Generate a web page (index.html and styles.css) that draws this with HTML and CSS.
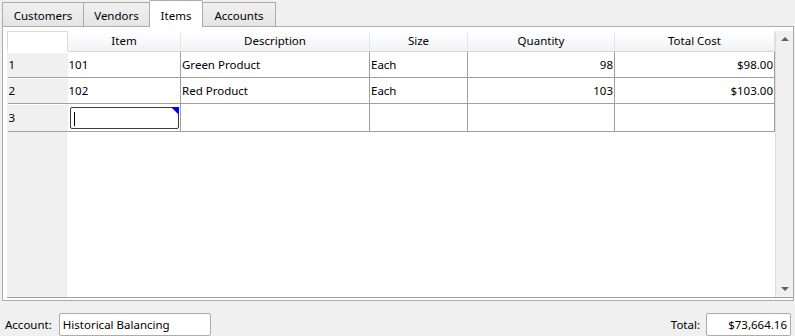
FILE: index.html
```html
<!DOCTYPE html>
<html lang="en">
<head>
  <meta charset="UTF-8" />
  <title>Items</title>
  <link rel="stylesheet" href="styles.css">
</head>
<body>
  <div class="tabs">
    <div class="tab tab-customers">Customers</div>
    <div class="tab tab-vendors">Vendors</div>
    <div class="tab tab-items active">Items</div>
    <div class="tab tab-accounts">Accounts</div>
  </div>

  <div class="panel">
    <div class="grid">
      <div class="grid-body">
        <table class="items">
          <colgroup>
            <col class="c-row" />
            <col class="c-item" />
            <col class="c-desc" />
            <col class="c-size" />
            <col class="c-qty" />
            <col class="c-total" />
          </colgroup>
          <thead>
            <tr>
              <th class="corner"></th>
              <th>Item</th>
              <th>Description</th>
              <th>Size</th>
              <th>Quantity</th>
              <th>Total Cost</th>
            </tr>
          </thead>
          <tbody>
            <tr>
              <td class="rowhead">1</td>
              <td>101</td>
              <td>Green Product</td>
              <td>Each</td>
              <td class="num">98</td>
              <td class="num">$98.00</td>
            </tr>
            <tr>
              <td class="rowhead">2</td>
              <td>102</td>
              <td>Red Product</td>
              <td>Each</td>
              <td class="num">103</td>
              <td class="num">$103.00</td>
            </tr>
            <tr>
              <td class="rowhead">3</td>
              <td class="editing"><div class="editor"><span class="caret"></span><span class="flag"></span></div></td>
              <td></td>
              <td></td>
              <td></td>
              <td></td>
            </tr>
          </tbody>
        </table>
      </div>
      <div class="scrollbar">
        <div class="arrow up"></div>
        <div class="track"></div>
        <div class="arrow down"></div>
      </div>
    </div>
  </div>

  <div class="footer">
    <label class="field-label">Account:</label>
    <div class="field account">Historical Balancing</div>
    <div class="spacer"></div>
    <label class="field-label">Total:</label>
    <div class="field total">$73,664.16</div>
  </div>
</body>
</html>
```

FILE: styles.css
```css
body {
  margin: 0;
  width: 795px;
  height: 336px;
  overflow: hidden;
  background: #f0f0f0;
  font-family: "Noto Sans", "Open Sans", sans-serif;
  font-size: 11.5px;
  color: #000;
}
.tabs {
  display: flex;
  align-items: flex-end;
  height: 26px;
  padding-left: 2px;
}
.tab {
  box-sizing: border-box;
  height: 24px;
  border: 1px solid #acacac;
  border-bottom: none;
  background: linear-gradient(#f0f0f0, #e5e5e5);
  text-align: center;
  line-height: 25px;
  margin-right: -1px;
}
.tab-customers { width: 82px; }
.tab-vendors { width: 67px; }
.tab-items { width: 54px; }
.tab-accounts { width: 74px; }
.tab.active {
  height: 27px;
  margin-bottom: -1px;
  background: #fff;
  position: relative;
  z-index: 1;
  line-height: 30px;
  border-radius: 2px 2px 0 0;
}
.panel {
  box-sizing: border-box;
  height: 275px;
  margin: 0 1px 0 2px;
  padding: 4px 0 3px 4px;
  background: #fff;
  border: 1px solid #acacac;
}
.grid {
  display: flex;
  height: 100%;
  border-bottom: 1px solid #a0a0a0;
}
.grid-body {
  flex: 1;
  background: linear-gradient(to right, #f0f0f0 60px, #fff 60px);
}
.items {
  border-collapse: collapse;
  table-layout: fixed;
  width: 767px;
  line-height: 16px;
}
.c-row { width: 60px; }
.c-item { width: 113px; }
.c-desc { width: 189px; }
.c-size { width: 98px; }
.c-qty { width: 147px; }
.c-total { width: 160px; }
.items th {
  height: 19px;
  padding: 0;
  font-weight: normal;
  background: linear-gradient(#ffffff, #f1f2f4);
  border-right: 1px solid #e3e4e6;
  border-bottom: 1px solid #d5d5d5;
  text-align: center;
}
.items th.corner {
  background: #fff;
  border: 1px solid #dadada;
  border-bottom-color: #fff;
}
.items td {
  height: 25px;
  padding: 0 0 0 1px;
  border-right: 1px solid #a0a0a0;
  border-bottom: 1px solid #a0a0a0;
  white-space: nowrap;
  overflow: hidden;
}
.items td.num {
  text-align: right;
  padding: 0 1px 0 0;
}
.items td.rowhead {
  background: #f0f0f0;
  border-right: none;
  border-bottom-color: #a0a0a0;
  box-shadow: inset 0 1px 0 #fff;
}
.items td.editing {
  padding: 1px 1px 1px 2px;
}
.editor {
  position: relative;
  box-sizing: border-box;
  height: 22px;
  border: 1px solid #3c3c3c;
  border-radius: 2px;
  background: #fff;
}
.caret {
  position: absolute;
  left: 3px;
  top: 4px;
  width: 1px;
  height: 14px;
  background: #000;
}
.flag {
  position: absolute;
  right: -1px;
  top: -1px;
  width: 0;
  height: 0;
  border-top: 8px solid #0000ff;
  border-left: 8px solid transparent;
}
.scrollbar {
  display: flex;
  flex-direction: column;
  width: 17px;
  background: #f0f0f0;
  border-left: 1px solid #dcdcdc;
}
.track {
  flex: 1;
}
.arrow {
  height: 17px;
  position: relative;
}
.arrow::after {
  content: "";
  position: absolute;
  left: 5px;
  width: 0;
  height: 0;
  border-left: 4px solid transparent;
  border-right: 4px solid transparent;
}
.arrow.up::after {
  top: 6px;
  border-bottom: 4px solid #606060;
}
.arrow.down::after {
  top: 7px;
  border-top: 4px solid #606060;
}
.footer {
  display: flex;
  align-items: center;
  height: 35px;
  padding: 12px 4px 0 5px;
  box-sizing: border-box;
}
.field-label {
  margin-right: 6px;
}
.field {
  box-sizing: border-box;
  height: 23px;
  line-height: 21px;
  padding: 0 3px;
  background: #fff;
  border: 1px solid #acacac;
  border-radius: 2px;
}
.account {
  width: 152px;
  margin-left: 1px;
}
.spacer {
  flex: 1;
}
.total {
  width: 85px;
  text-align: right;
}
```
